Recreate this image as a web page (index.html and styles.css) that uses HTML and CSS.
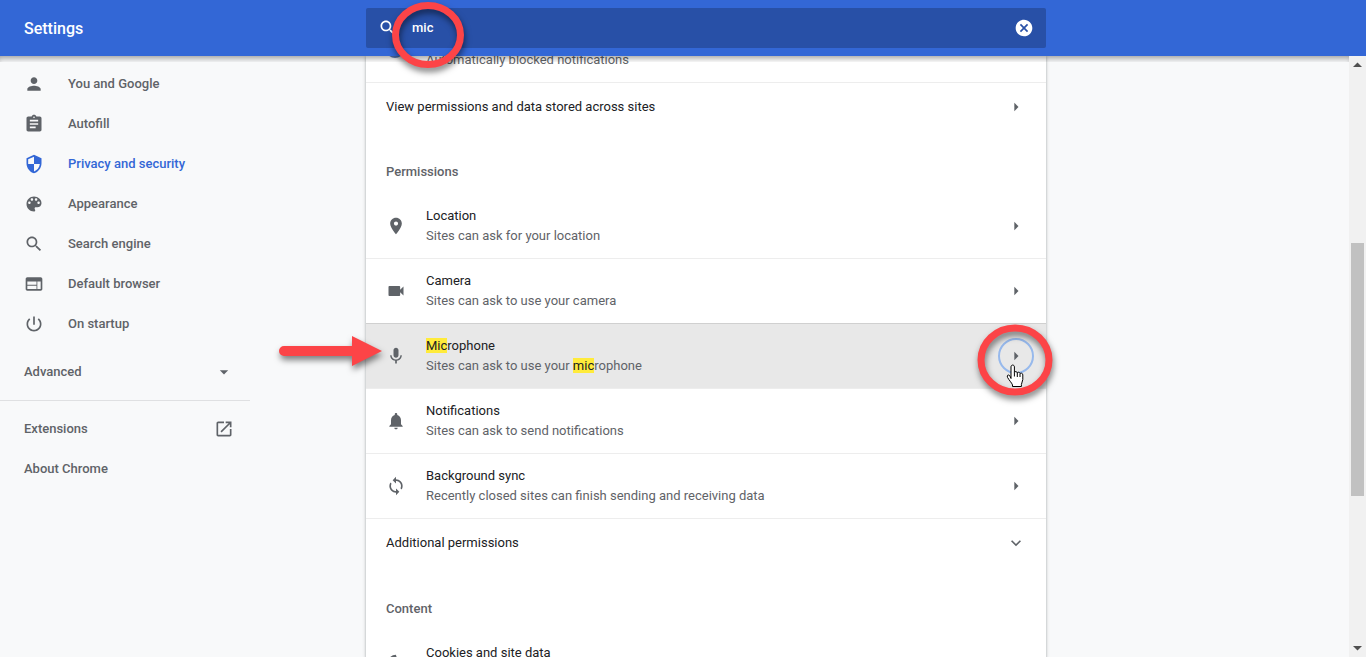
FILE: index.html
```html
<!DOCTYPE html>
<html lang="en">
<head>
  <meta charset="UTF-8">
  <title>Settings</title>
  <meta name="viewport" content="width=device-width, initial-scale=1.0">
  <link rel="stylesheet" href="styles.css">
</head>
<body>
<header class="toolbar">
  <h1>Settings</h1>
  <div class="search">
    <svg class="icon" viewBox="0 0 24 24"><path d="M15.5 14h-.79l-.28-.27C15.41 12.59 16 11.11 16 9.5 16 5.91 13.09 3 9.5 3S3 5.91 3 9.5 5.91 16 9.5 16c1.61 0 3.09-.59 4.23-1.57l.27.28v.79l5 4.99L20.49 19l-4.99-5zm-6 0C7.01 14 5 11.99 5 9.5S7.01 5 9.5 5 14 7.01 14 9.5 11.99 14 9.5 14z"/></svg>
    <input type="text" value="mic" aria-label="Search settings">
    <button class="clear" aria-label="Clear search">
      <svg class="icon" viewBox="0 0 24 24"><path d="M12 2C6.47 2 2 6.47 2 12s4.47 10 10 10 10-4.47 10-10S17.53 2 12 2zm5 13.59L15.59 17 12 13.41 8.41 17 7 15.59 10.59 12 7 8.41 8.41 7 12 10.59 15.59 7 17 8.41 13.41 12 17 15.59z"/></svg>
    </button>
    <svg class="mark mark-search" viewBox="0 0 72 66"><ellipse cx="36" cy="33" rx="32.5" ry="29.5"/></svg>
  </div>
</header>

<div class="container">
  <nav class="menu">
    <a href="#people"><svg class="icon" viewBox="0 0 24 24"><path d="M12 12c2.21 0 4-1.79 4-4s-1.79-4-4-4-4 1.79-4 4 1.79 4 4 4zm0 2c-2.67 0-8 1.34-8 4v2h16v-2c0-2.66-5.33-4-8-4z"/></svg>You and Google</a>
    <a href="#autofill"><svg class="icon" viewBox="0 0 24 24"><path d="M19 3h-4.18C14.4 1.84 13.3 1 12 1c-1.3 0-2.4.84-2.82 2H5c-1.1 0-2 .9-2 2v14c0 1.1.9 2 2 2h14c1.1 0 2-.9 2-2V5c0-1.1-.9-2-2-2zm-7 0c.55 0 1 .45 1 1s-.45 1-1 1-1-.45-1-1 .45-1 1-1zm2 14H7v-2h7v2zm3-4H7v-2h10v2zm0-4H7V7h10v2z"/></svg>Autofill</a>
    <a href="#privacy" class="selected"><svg class="icon" viewBox="0 0 24 24"><path d="M12 1L3 5v6c0 5.55 3.84 10.74 9 12 5.16-1.26 9-6.45 9-12V5l-9-4zm0 10.99h7c-.53 4.12-3.28 7.79-7 8.94V12H5V6.3l7-3.11v8.8z"/></svg>Privacy and security</a>
    <a href="#appearance"><svg class="icon" viewBox="0 0 24 24"><path d="M12 3c-4.97 0-9 4.03-9 9s4.03 9 9 9c.83 0 1.5-.67 1.5-1.5 0-.39-.15-.74-.39-1.01-.23-.26-.38-.61-.38-.99 0-.83.67-1.5 1.5-1.5H16c2.76 0 5-2.24 5-5 0-4.42-4.03-8-9-8zm-5.5 9c-.83 0-1.5-.67-1.5-1.5S5.67 9 6.5 9 8 9.67 8 10.5 7.33 12 6.5 12zm3-4C8.67 8 8 7.33 8 6.5S8.67 5 9.5 5s1.5.67 1.5 1.5S10.33 8 9.5 8zm5 0c-.83 0-1.5-.67-1.5-1.5S13.67 5 14.5 5s1.5.67 1.5 1.5S15.33 8 14.5 8zm3 4c-.83 0-1.5-.67-1.5-1.5S16.67 9 17.5 9s1.5.67 1.5 1.5-.67 1.5-1.5 1.5z"/></svg>Appearance</a>
    <a href="#search"><svg class="icon" viewBox="0 0 24 24"><path d="M15.5 14h-.79l-.28-.27C15.41 12.59 16 11.11 16 9.5 16 5.91 13.09 3 9.5 3S3 5.91 3 9.5 5.91 16 9.5 16c1.61 0 3.09-.59 4.23-1.57l.27.28v.79l5 4.99L20.49 19l-4.99-5zm-6 0C7.01 14 5 11.99 5 9.5S7.01 5 9.5 5 14 7.01 14 9.5 11.99 14 9.5 14z"/></svg>Search engine</a>
    <a href="#browser"><svg class="icon" viewBox="0 0 24 24"><path d="M20 4H4c-1.1 0-1.99.9-1.99 2L2 18c0 1.1.9 2 2 2h16c1.1 0 2-.9 2-2V6c0-1.1-.9-2-2-2zm-5 14H4v-4h11v4zm0-5H4V9h11v4zm5 5h-4V9h4v9z"/></svg>Default browser</a>
    <a href="#startup"><svg class="icon" viewBox="0 0 24 24"><path d="M13 3h-2v10h2V3zm4.83 2.17l-1.42 1.42C17.99 7.86 19 9.81 19 12c0 3.87-3.13 7-7 7s-7-3.13-7-7c0-2.19 1.01-4.14 2.58-5.42L6.17 5.17C4.23 6.82 3 9.26 3 12c0 4.97 4.03 9 9 9s9-4.03 9-9c0-2.74-1.23-5.18-3.17-6.83z"/></svg>On startup</a>
    <button class="advanced">Advanced<svg class="icon" viewBox="0 0 24 24"><path d="M7 10l5 5 5-5z"/></svg></button>
    <hr>
    <a href="#extensions" class="spread">Extensions<svg class="icon" viewBox="0 0 24 24"><path d="M19 19H5V5h7V3H5c-1.11 0-2 .9-2 2v14c0 1.1.89 2 2 2h14c1.1 0 2-.9 2-2v-7h-2v7zM14 3v2h3.59l-9.83 9.83 1.41 1.41L19 6.41V10h2V3h-7z"/></svg></a>
    <a href="#about">About Chrome</a>
  </nav>

  <main class="card">
    <div class="row clipped">
      <svg class="peek" viewBox="0 0 20 3"><circle cx="9" cy="-7" r="9"/></svg>
      <div class="text"><p>Automatically blocked notifications</p></div>
    </div>
    <div class="row single">
      <div class="text">View permissions and data stored across sites</div>
      <button class="go" aria-label="View permissions"><svg class="icon" viewBox="0 0 24 24"><path d="M10 7l5 5-5 5z"/></svg></button>
    </div>

    <h2>Permissions</h2>
    <div class="row first">
      <svg class="icon" viewBox="0 0 24 24"><path d="M12 2C8.13 2 5 5.13 5 9c0 5.25 7 13 7 13s7-7.75 7-13c0-3.87-3.13-7-7-7zm0 9.5c-1.38 0-2.5-1.12-2.5-2.5s1.12-2.5 2.5-2.5 2.5 1.12 2.5 2.5-1.12 2.5-2.5 2.5z"/></svg>
      <div class="text">Location<p>Sites can ask for your location</p></div>
      <button class="go" aria-label="Location"><svg class="icon" viewBox="0 0 24 24"><path d="M10 7l5 5-5 5z"/></svg></button>
    </div>
    <div class="row">
      <svg class="icon" viewBox="0 0 24 24"><path d="M17 10.5V7c0-.55-.45-1-1-1H4c-.55 0-1 .45-1 1v10c0 .55.45 1 1 1h12c.55 0 1-.45 1-1v-3.5l4 4v-11l-4 4z"/></svg>
      <div class="text">Camera<p>Sites can ask to use your camera</p></div>
      <button class="go" aria-label="Camera"><svg class="icon" viewBox="0 0 24 24"><path d="M10 7l5 5-5 5z"/></svg></button>
    </div>
    <div class="row active">
      <svg class="icon" viewBox="0 0 24 24"><path d="M12 14c1.66 0 2.99-1.34 2.99-3L15 5c0-1.66-1.34-3-3-3S9 3.34 9 5v6c0 1.66 1.34 3 3 3zm5.3-3c0 3-2.54 5.1-5.3 5.1S6.7 14 6.7 11H5c0 3.41 2.72 6.23 6 6.72V21h2v-3.28c3.28-.48 6-3.3 6-6.72h-1.7z"/></svg>
      <div class="text"><mark>Mic</mark>rophone<p>Sites can ask to use your <mark>mic</mark>rophone</p></div>
      <button class="go focused" aria-label="Microphone">
        <svg class="icon" viewBox="0 0 24 24"><path d="M10 7l5 5-5 5z"/></svg>
        <svg class="mark mark-button" viewBox="0 0 76 72"><ellipse cx="38" cy="36" rx="34" ry="32"/></svg>
        <svg class="hand" viewBox="0 0 18 24"><path d="M5 14.5V3c0-2.6 3.4-2.6 3.4 0v5.5c.4-1.3 2.7-1.2 2.9.4.5-1.1 2.5-.9 2.7.7.8-.9 2.8-.5 2.8 1.3v4.6c0 2-1.4 3.2-1.4 5v2H6.5v-1.6C5.6 18.6 3 16.2 1.5 13.3c-1-2 1-3 2.2-1.7zM8.4 8.5v4M11.3 9v4M14 10v3"/></svg>
      </button>
      <svg class="arrow" viewBox="0 0 104 32"><path d="M6 11h68V1l30 15-30 15V21H6a5 5 0 0 1 0-10z"/></svg>
    </div>
    <div class="row">
      <svg class="icon" viewBox="0 0 24 24"><path d="M12 22c1.1 0 2-.9 2-2h-4c0 1.1.89 2 2 2zm6-6v-5c0-3.07-1.64-5.64-4.5-6.32V4c0-.83-.67-1.5-1.5-1.5s-1.5.67-1.5 1.5v.68C7.63 5.36 6 7.92 6 11v5l-2 2v1h16v-1l-2-2z"/></svg>
      <div class="text">Notifications<p>Sites can ask to send notifications</p></div>
      <button class="go" aria-label="Notifications"><svg class="icon" viewBox="0 0 24 24"><path d="M10 7l5 5-5 5z"/></svg></button>
    </div>
    <div class="row">
      <svg class="icon" viewBox="0 0 24 24"><path d="M12 4V1L8 5l4 4V6c3.31 0 6 2.69 6 6 0 1.01-.25 1.97-.7 2.8l1.46 1.46C19.54 15.03 20 13.57 20 12c0-4.42-3.58-8-8-8zm0 14c-3.31 0-6-2.69-6-6 0-1.01.25-1.97.7-2.8L5.24 7.74C4.46 8.97 4 10.43 4 12c0 4.42 3.58 8 8 8v3l4-4-4-4v3z"/></svg>
      <div class="text">Background sync<p>Recently closed sites can finish sending and receiving data</p></div>
      <button class="go" aria-label="Background sync"><svg class="icon" viewBox="0 0 24 24"><path d="M10 7l5 5-5 5z"/></svg></button>
    </div>
    <div class="row single expander">
      <div class="text">Additional permissions</div>
      <button class="go" aria-label="Additional permissions"><svg class="icon" viewBox="0 0 24 24"><path d="M16.59 8.59L12 13.17 7.41 8.59 6 10l6 6 6-6z"/></svg></button>
    </div>

    <h2>Content</h2>
    <div class="row first">
      <svg class="icon" viewBox="0 0 24 24"><path d="M12 2a10 10 0 1 0 10 10 5 5 0 0 1-5-5 5 5 0 0 1-5-5zM8.5 8a1.5 1.5 0 1 1 0 3 1.5 1.5 0 0 1 0-3z"/></svg>
      <div class="text">Cookies and site data</div>
    </div>
  </main>

  <div class="scrollbar">
    <svg viewBox="0 0 17 17"><path d="M4 11h9L8.5 6.5z"/></svg>
    <div class="thumb"></div>
    <svg viewBox="0 0 17 17"><path d="M4 6h9l-4.5 4.5z"/></svg>
  </div>
</div>
</body>
</html>
```
FILE: styles.css
```css
* {
  box-sizing: border-box;
}
body {
  margin: 0;
  height: 100vh;
  display: flex;
  flex-direction: column;
  overflow: hidden;
  font-family: Roboto, "Liberation Sans", sans-serif;
  font-size: 13px;
  line-height: 20px;
  color: #202124;
  background: #f8f9fa;
}
button {
  font: inherit;
  color: inherit;
  background: none;
  border: none;
  padding: 0;
  cursor: pointer;
}
.icon {
  width: 20px;
  height: 20px;
  flex: none;
  fill: #5f6368;
}

/* toolbar and content share the same columns */
.toolbar, .container {
  display: grid;
  grid-template-columns: minmax(266px, 366fr) minmax(0, 680px) 320fr;
}
.toolbar {
  position: relative;
  z-index: 2;
  flex: none;
  height: 56px;
  align-items: center;
  background: #3367d6;
  color: #fff;
}
.toolbar h1 {
  margin: 0;
  padding: 2px 0 0 24px;
  font-size: 16px;
  font-weight: 500;
}
.search {
  position: relative;
  display: flex;
  align-items: center;
  height: 40px;
  padding: 0 12px;
  border-radius: 2px;
  background: #2850a7;
}
.search .icon {
  fill: #fff;
}
.search input {
  flex: 1;
  min-width: 0;
  padding: 0 14px;
  border: none;
  outline: none;
  background: none;
  color: #fff;
  font: inherit;
  font-weight: 500;
}
.clear {
  display: flex;
}

.container {
  position: relative;
  flex: 1;
  min-height: 0;
  grid-template-rows: 100%;
  overflow: hidden;
}
.container::before {
  content: "";
  position: absolute;
  top: 0;
  left: 0;
  right: 17px;
  height: 6px;
  z-index: 1;
  box-shadow: inset 0 5px 6px -3px rgba(0, 0, 0, .4);
}

/* side menu */
.menu {
  width: 250px;
  padding-top: 8px;
  font-weight: 500;
  color: #5f6368;
}
.menu a, .advanced {
  display: flex;
  align-items: center;
  gap: 24px;
  width: 100%;
  height: 40px;
  padding: 0 16px 0 24px;
  color: inherit;
  text-decoration: none;
}
.menu .selected, .menu .selected .icon {
  color: #3367d6;
  fill: #3367d6;
}
.menu .spread, .menu .advanced {
  justify-content: space-between;
}
.menu .advanced {
  height: 48px;
  margin: 4px 0;
  font-weight: 500;
}
.menu hr {
  margin: 0 0 8px;
  border: none;
  border-top: 1px solid #dfe0e2;
}

/* settings card */
.card {
  background: #fff;
  box-shadow: 0 1px 2px rgba(60, 64, 67, .3), 0 1px 3px 1px rgba(60, 64, 67, .15);
}
.card h2 {
  margin: 0;
  padding: 31px 20px 12px;
  font-size: 13px;
  line-height: 20px;
  font-weight: 500;
  color: #5f6368;
}
.row {
  display: flex;
  align-items: center;
  gap: 20px;
  padding: 12px 12px 12px 20px;
  border-top: 1px solid #ededed;
}
.row.first, .row.clipped {
  border-top: none;
}
.row.first {
  min-height: 64px;
}
.row.first .text {
  min-height: 40px;
}
.row.single {
  padding-top: 6px;
  padding-bottom: 6px;
}
.row.expander {
  border-bottom: 1px solid transparent;
}
.row.clipped {
  height: 26px;
  align-items: flex-end;
  padding-top: 0;
}
.row.active {
  position: relative;
  z-index: 1;
  background: #e8e8e8;
  border-top-color: #d0d0d0;
}
.text {
  flex: 1;
  min-width: 0;
}
.text p {
  margin: 0;
  color: #5f6368;
}
mark {
  background: #ffeb3b;
  color: #202124;
}
.peek {
  width: 20px;
  height: 3px;
  align-self: flex-start;
  fill: #5b7fc4;
}
.go {
  display: flex;
  align-items: center;
  justify-content: center;
  width: 36px;
  height: 36px;
  border-radius: 50%;
}
.go.focused {
  position: relative;
  border: 2px solid #97b9ec;
}

/* red highlights */
.mark, .arrow, .hand {
  position: absolute;
  overflow: visible;
  pointer-events: none;
}
.mark {
  fill: none;
  stroke: #fc4447;
  stroke-width: 7;
  filter: drop-shadow(1px 4px 3px rgba(0, 0, 0, .5));
}
.mark-search {
  left: 26px;
  top: -6px;
  width: 72px;
  height: 66px;
}
.mark-button {
  left: -23px;
  top: -16px;
  width: 76px;
  height: 72px;
}
.arrow {
  left: -88px;
  top: 11px;
  width: 104px;
  height: 32px;
  fill: #fc4447;
  filter: drop-shadow(1px 4px 3px rgba(0, 0, 0, .5));
}
.hand {
  left: 6px;
  top: 24px;
  width: 18px;
  height: 24px;
  fill: #fff;
  stroke: #000;
}

.scrollbar {
  justify-self: end;
  display: grid;
  grid-template-rows: 17px 170fr 253fr 144fr 17px;
  width: 17px;
  background: #f1f1f1;
}
.scrollbar svg {
  width: 17px;
  height: 17px;
  fill: #505050;
}
.scrollbar svg:last-child {
  grid-row: 5;
}
.thumb {
  grid-row: 3;
  margin: 0 2px;
  background: #c1c1c1;
}
```
